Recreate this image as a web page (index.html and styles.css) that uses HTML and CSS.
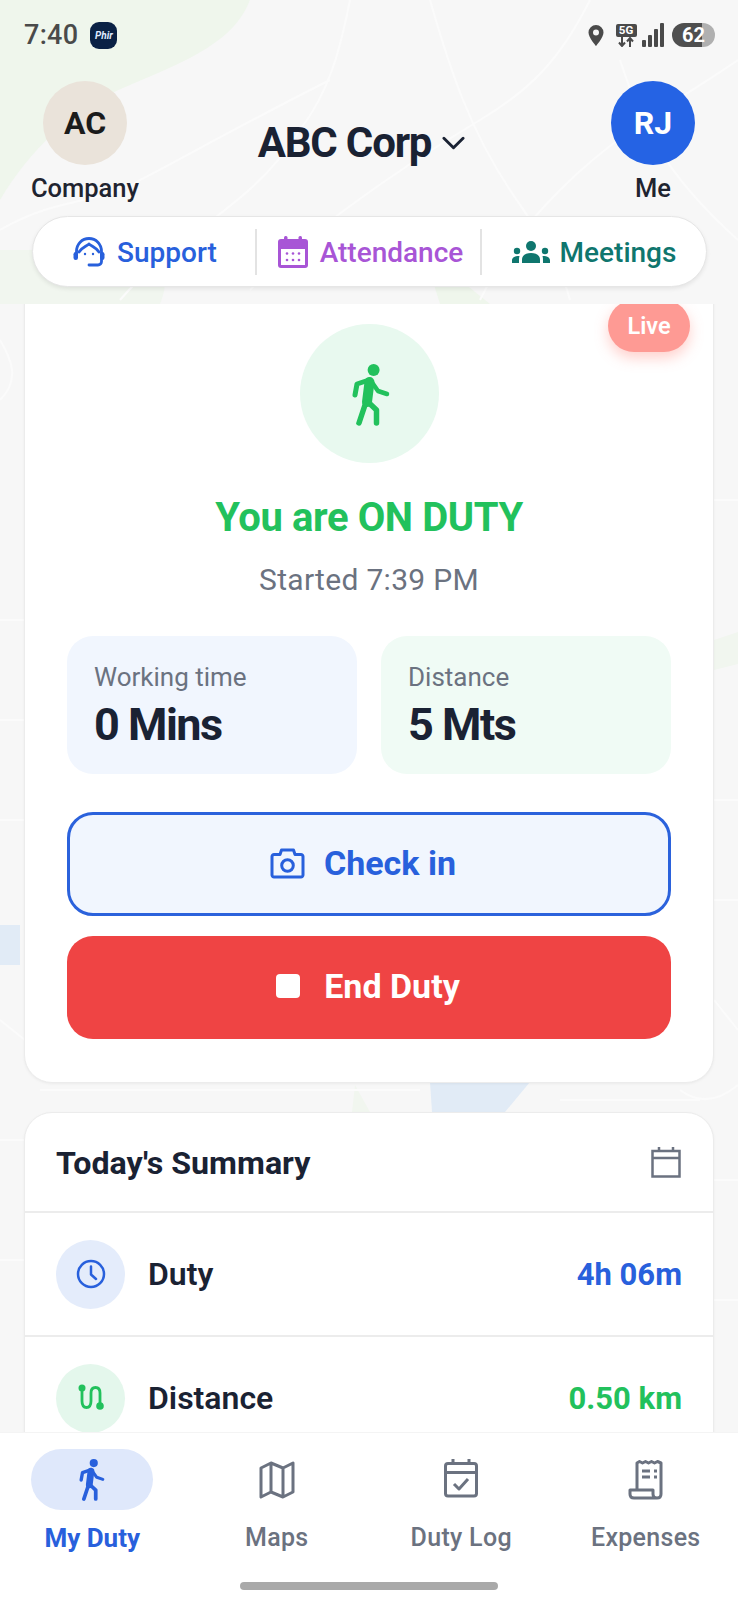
FILE: index.html
```html
<!DOCTYPE html>
<html lang="en">
<head>
<meta charset="utf-8">
<title>My Duty</title>
<link rel="stylesheet" href="styles.css">
</head>
<body>
<svg class="defs" width="0" height="0" aria-hidden="true">
  <symbol id="walker" viewBox="0 0 38 62">
    <circle cx="21.600" cy="6" r="6" fill="currentColor"/>
    <g fill="none" stroke="currentColor" stroke-linecap="round" stroke-linejoin="round">
      <path d="M17 16 L5 20 L3 31" stroke-width="5"/>
      <path d="M19 17 L26 27 L35 30" stroke-width="4.500"/>
      <path d="M17.500 18 L15 38" stroke-width="10"/>
      <path d="M14 38 L7 59" stroke-width="5.500"/>
      <path d="M16 38 L24.500 46 L24.500 59" stroke-width="5.500"/>
    </g>
  </symbol>
</svg>

<svg class="map" viewBox="0 0 738 1600" preserveAspectRatio="none" aria-hidden="true">
  <path class="park" d="M0 0H250C235 40 190 60 130 85C70 110 30 150 0 200Z"/>
  <path class="park-soft" d="M0 250H150C168 262 168 285 160 304H0Z"/>
  <path class="park" d="M430 272C445 265 460 280 490 304H440Z"/>
  <path class="park-soft" d="M714 640L738 632V664L714 670Z"/>
  <path class="water" d="M0 925H20V965H0Z"/>
  <path class="water" d="M430 1082H530L505 1112H432Z"/>
  <path class="park-soft" d="M355 1085L370 1112H352Z"/>
  <g class="roads">
    <path d="M120 300C180 230 250 210 300 130C330 90 340 50 350 0"/>
    <path d="M0 230C60 195 100 205 140 180C170 165 250 120 330 80"/>
    <path d="M250 290C300 240 380 180 480 120C530 90 560 60 590 0"/>
    <path d="M430 0C450 70 470 130 510 190C530 220 560 260 570 300"/>
    <path d="M738 60C680 100 620 130 560 190C520 230 500 260 480 300"/>
    <path d="M620 60C640 120 660 170 738 240"/>
    <path d="M0 340C12 360 20 380 0 400"/>
    <path d="M0 620H25M0 720H25M0 820H25M714 500H738M714 800H738M714 900H738"/>
    <path d="M0 1020L25 1040M714 1000L738 1030M0 1140H25M714 1180H738M0 1260H25M714 1300H738"/>
    <path d="M40 1090H420M560 1100H700"/>
    <path d="M680 1090C700 1105 720 1100 738 1085"/>
  </g>
</svg>

<div class="app">
  <header class="status">
    <div class="status-left">
      <span class="clock">7:40</span>
      <span class="app-badge">Phir</span>
    </div>
    <div class="status-right">
      <svg class="pin" viewBox="0 0 16 21"><path fill-rule="evenodd" d="M8 0a7.500 7.500 0 0 1 7.500 7.500C15.500 12.500 8 21 8 21S.5 12.500.5 7.500A7.500 7.500 0 0 1 8 0Zm0 4.500a3 3 0 1 0 0 6 3 3 0 0 0 0-6Z"/></svg>
      <span class="net">
        <span class="net-label">5G</span>
        <svg class="net-arrows" viewBox="0 0 20 10"><path d="M6 0V8M3 5.500L6 9L9 5.500M14 10V2M11 4.500L14 1L17 4.500"/></svg>
      </span>
      <svg class="signal" viewBox="0 0 22 24"><rect x="0" y="17" width="4" height="7" rx="1"/><rect x="6" y="12" width="4" height="12" rx="1"/><rect x="12" y="6" width="4" height="18" rx="1"/><rect x="18" y="0" width="4" height="24" rx="1"/></svg>
      <span class="battery"><span class="battery-text">62</span></span>
    </div>
  </header>

  <section class="top">
    <div class="person">
      <span class="avatar avatar-company">AC</span>
      <span class="person-label">Company</span>
    </div>
    <div class="company">
      <span class="company-name">ABC Corp</span>
      <svg class="chevron" viewBox="0 0 24 14"><path d="M2 2L12 12L22 2"/></svg>
    </div>
    <div class="person">
      <span class="avatar avatar-me">RJ</span>
      <span class="person-label">Me</span>
    </div>
  </section>

  <nav class="quick">
    <a class="quick-item quick-blue">
      <svg class="quick-icon icon-support" viewBox="0 0 32 30"><path class="line" d="M3.500 19V14.500C3.500 7 9 1.500 16 1.500S28.500 7 28.500 14.500V19"/><path class="line" d="M6 15C8 11 12 10 16 7C20 10 24 11 26 15"/><path class="line" d="M28.500 21V24.500C28.500 26.500 27 28 25 28H16"/><rect class="solid" x="0.500" y="15" width="4.500" height="8" rx="2.200"/><rect class="solid" x="27" y="15" width="4.500" height="8" rx="2.200"/><circle class="solid" cx="12" cy="17" r="1.200"/><circle class="solid" cx="20" cy="17" r="1.200"/></svg>
      <span>Support</span>
    </a>
    <a class="quick-item quick-purple">
      <svg class="quick-icon icon-attend" viewBox="0 0 30 32"><rect class="solid" x="6" y="0" width="3.500" height="7" rx="1.500"/><rect class="solid" x="20.500" y="0" width="3.500" height="7" rx="1.500"/><rect class="solid" x="0" y="3" width="30" height="29" rx="3"/><rect class="hole" x="3" y="13" width="24" height="16"/><g class="dots"><circle cx="9" cy="17.500" r="1.300"/><circle cx="15" cy="17.500" r="1.300"/><circle cx="21" cy="17.500" r="1.300"/><circle cx="9" cy="24" r="1.300"/><circle cx="15" cy="24" r="1.300"/><circle cx="21" cy="24" r="1.300"/></g></svg>
      <span>Attendance</span>
    </a>
    <a class="quick-item quick-teal">
      <svg class="quick-icon icon-meet" viewBox="0 0 38 22"><circle class="solid" cx="19" cy="5" r="5"/><circle class="solid" cx="5" cy="10" r="3.200"/><circle class="solid" cx="33" cy="10" r="3.200"/><path class="solid" d="M10 22V18.500C10 14.500 13.500 12 19 12S28 14.500 28 18.500V22Z"/><path class="solid" d="M0 22V19.500C0 17 2 15 7.500 15C7 16.500 7 18 7 22Z"/><path class="solid" d="M38 22V19.500C38 17 36 15 30.500 15C31 16.500 31 18 31 22Z"/></svg>
      <span>Meetings</span>
    </a>
  </nav>

  <main class="scroll">
    <section class="card duty">
      <span class="live">Live</span>
      <div class="hero-circle">
        <svg class="hero-walker"><use href="#walker"/></svg>
      </div>
      <h1 class="duty-title">You are ON DUTY</h1>
      <p class="duty-started">Started 7:39 PM</p>
      <div class="stats">
        <div class="stat stat-blue">
          <span class="stat-label">Working time</span>
          <span class="stat-value">0 Mins</span>
        </div>
        <div class="stat stat-green">
          <span class="stat-label">Distance</span>
          <span class="stat-value">5 Mts</span>
        </div>
      </div>
      <button class="btn btn-check">
        <svg class="camera" viewBox="0 0 35 31"><path d="M2 8.500C2 7.500 3 6.500 4 6.500H10L11.500 2H23.500L25 6.500H31C32 6.500 33 7.500 33 8.500V27C33 28 32 29 31 29H4C3 29 2 28 2 27Z"/><circle cx="17.500" cy="17.500" r="5.800"/></svg>
        <span>Check in</span>
      </button>
      <button class="btn btn-end">
        <span class="stop"></span>
        <span>End Duty</span>
      </button>
    </section>

    <section class="card summary">
      <div class="summary-head">
        <h2 class="summary-title">Today's Summary</h2>
        <svg class="summary-cal" viewBox="0 0 30 32"><path d="M1.500 5H28.500V30.500H1.500ZM1.500 12H28.500M8 1V5M22 1V5"/></svg>
      </div>
      <div class="row">
        <span class="row-icon row-icon-blue">
          <svg class="clock-icon" viewBox="0 0 30 30"><circle cx="15" cy="15" r="13"/><path d="M15 7.500V15.500L20 20"/></svg>
        </span>
        <span class="row-label">Duty</span>
        <span class="row-value value-blue">4h 06m</span>
      </div>
      <div class="row">
        <span class="row-icon row-icon-green">
          <svg class="route-icon" viewBox="0 0 26 28"><path d="M4 4V17C4 21 5.500 23.500 8.500 23.500S13 21 13 17V9C13 5.500 14.500 3.500 17.500 3.500S22 5.500 22 9V21"/><circle cx="4" cy="4" r="3.500"/><circle cx="22" cy="22" r="3.800"/></svg>
        </span>
        <span class="row-label">Distance</span>
        <span class="row-value value-green">0.50 km</span>
      </div>
    </section>
  </main>

  <footer class="tabs">
    <a class="tab tab-active">
      <span class="tab-icon"><svg class="tab-walker"><use href="#walker"/></svg></span>
      <span class="tab-label">My Duty</span>
    </a>
    <a class="tab">
      <span class="tab-icon"><svg class="tab-svg" viewBox="0 0 36 38"><path d="M2 7L12 2L24 7L34 2V31L24 36L12 31L2 36ZM12 2V31M24 7V36"/></svg></span>
      <span class="tab-label">Maps</span>
    </a>
    <a class="tab">
      <span class="tab-icon"><svg class="tab-svg tab-svg-up" viewBox="0 0 36 40"><path d="M2.500 8C2.500 6.500 3.500 5.500 5 5.500H31C32.500 5.500 33.500 6.500 33.500 8V35.500C33.500 37 32.500 38 31 38H5C3.500 38 2.500 37 2.500 35.500ZM2.500 14.500H33.500M10 1V5.500M26 1V5.500M11 26L16 31L25 21"/></svg></span>
      <span class="tab-label">Duty Log</span>
    </a>
    <a class="tab">
      <span class="tab-icon"><svg class="tab-svg" viewBox="0 0 36 40"><path d="M9 30V3L11.500 1.500L14.500 3L17.500 1.500L20.500 3L23.500 1.500L26.500 3L29.500 1.500L33 3V34C33 36.500 31.500 38 29 38H6C3.500 38 2 36.500 2 34V30H25V34C25 36.500 26.500 38 29 38M14 11H22M14 17H22M26 11H29M26 17H29"/></svg></span>
      <span class="tab-label">Expenses</span>
    </a>
  </footer>
  <div class="home-bar"><span class="home-pill"></span></div>
</div>
</body>
</html>
```

FILE: styles.css
```css
* { box-sizing: border-box; }
html, body { margin: 0; padding: 0; }
body {
  position: relative;
  width: 738px;
  height: 1600px;
  overflow: hidden;
  background: #f7f7f7;
  font-family: Roboto, "Liberation Sans", sans-serif;
  color: #1a2233;
}
.defs { position: absolute; }
.map { position: absolute; inset: 0; width: 738px; height: 1600px; }
.park { fill: #eff6ec; }
.park-soft { fill: #f1f6ef; }
.water { fill: #e1ebf6; }
.roads { fill: none; stroke: #fbfbfb; stroke-width: 2; }
.app {
  position: relative;
  display: flex;
  flex-direction: column;
  height: 1600px;
}

/* status bar */
.status {
  display: flex;
  justify-content: space-between;
  align-items: center;
  height: 70px;
  padding: 0 23px 0 24px;
  color: #4a4a4a;
}
.status-left { display: flex; align-items: center; gap: 12px; }
.clock { font-size: 27px; font-weight: 500; letter-spacing: .3px; }
.app-badge {
  display: flex;
  align-items: center;
  justify-content: center;
  width: 27px;
  height: 27px;
  border-radius: 9px;
  background: #0a2145;
  color: #dfe9ff;
  font-size: 10px;
  font-style: italic;
  font-weight: 700;
}
.status-right { display: flex; align-items: center; }
.pin { width: 16px; height: 21px; fill: #4a4a4a; margin-right: 11px; }
.net { display: flex; flex-direction: column; align-items: center; width: 22px; margin-right: 5px; }
.net-label {
  display: block;
  width: 21px;
  height: 13px;
  border-radius: 2px;
  background: #4a4a4a;
  color: #fff;
  font-size: 11.500px;
  font-weight: 700;
  line-height: 13px;
  text-align: center;
}
.net-arrows { width: 20px; height: 10px; fill: none; stroke: #4a4a4a; stroke-width: 2; }
.signal { width: 22px; height: 24px; fill: #4a4a4a; margin-right: 8px; }
.battery {
  display: flex;
  align-items: center;
  justify-content: center;
  width: 43px;
  height: 24px;
  border-radius: 12px;
  background: linear-gradient(90deg, #4f4f4f 70%, #b0b0b0 70%);
}
.battery-text { color: #fff; font-size: 20px; font-weight: 700; }

/* header */
.top {
  display: grid;
  grid-template-columns: 110px 1fr 110px;
  align-items: start;
  height: 130px;
  padding: 11px 30px 0 30px;
}
.person { display: flex; flex-direction: column; align-items: center; }
.avatar {
  display: flex;
  align-items: center;
  justify-content: center;
  width: 84px;
  height: 84px;
  border-radius: 50%;
  font-size: 32px;
  font-weight: 700;
}
.avatar-company { background: #eae3da; color: #1b1b1b; }
.avatar-me { background: #2563e4; color: #fff; }
.person-label { margin-top: 8px; font-size: 25.500px; font-weight: 500; line-height: 30px; color: #1f2430; }
.company {
  display: flex;
  align-items: center;
  justify-content: center;
  gap: 11px;
  padding: 35px 15px 0 0;
}
.company-name { font-size: 42px; font-weight: 700; line-height: 54px; letter-spacing: -1.200px; }
.chevron { width: 23px; height: 14px; fill: none; stroke: #1a2233; stroke-width: 3; stroke-linecap: round; stroke-linejoin: round; }

/* quick links */
.quick {
  display: grid;
  grid-template-columns: 222px 225px 1fr;
  align-items: center;
  height: 71px;
  margin: 16px 31px 17px 32px;
  border: 1px solid #e6e6e6;
  border-radius: 36px;
  background: #fff;
  box-shadow: 0 2px 4px rgba(0,0,0,.08);
}
.quick-item {
  display: flex;
  align-items: center;
  justify-content: center;
  gap: 12px;
  height: 46px;
  padding-top: 1px;
  font-size: 28px;
  font-weight: 500;
}
.quick-item + .quick-item { border-left: 2px solid #e3e3e3; }
.quick-blue { padding-left: 2px; color: #2860dc; }
.quick-purple { padding-left: 4px; color: #a855d6; }
.quick-teal { gap: 10px; color: #0f766e; }
.quick-icon .solid { fill: currentColor; }
.quick-icon .line { fill: none; stroke: currentColor; stroke-width: 2.800; stroke-linecap: round; }
.quick-icon .hole { fill: #fff; }
.quick-icon .dots { fill: #a855d6; }
.icon-support { width: 32px; height: 30px; }
.icon-attend { width: 30px; height: 32px; }
.icon-meet { width: 38px; height: 22px; }

/* scrolling content */
.scroll {
  flex: 1;
  min-height: 0;
  overflow: hidden;
  padding: 0 24px;
}
.card {
  border: 1px solid #ececec;
  border-radius: 28px;
  background: #fff;
  box-shadow: 0 1px 3px rgba(0,0,0,.05);
}
.duty {
  position: relative;
  display: flex;
  flex-direction: column;
  align-items: center;
  margin-top: -30px;
  padding: 49px 42px 42px;
  height: 809px;
}
.live {
  position: absolute;
  top: 25px;
  right: 23px;
  width: 82px;
  height: 52px;
  border-radius: 26px;
  background: #fe9a94;
  box-shadow: 0 6px 14px rgba(254,120,110,.35);
  color: #fff;
  font-size: 23.500px;
  font-weight: 600;
  line-height: 52px;
  text-align: center;
}
.hero-circle {
  display: flex;
  align-items: center;
  justify-content: center;
  width: 139px;
  height: 139px;
  border-radius: 50%;
  background: #e8f9ef;
}
.hero-walker { width: 38px; height: 62px; margin: 3px 0 0 3px; color: #22c15c; }
.duty-title {
  margin: 31px 0 0;
  font-size: 40px;
  font-weight: 700;
  line-height: 48px;
  color: #22c15c;
  letter-spacing: -.4px;
}
.duty-started {
  margin: 20px 0 0;
  font-size: 30px;
  line-height: 36px;
  color: #6b7280;
  letter-spacing: .3px;
}
.stats {
  display: grid;
  grid-template-columns: 1fr 1fr;
  gap: 24px;
  width: 100%;
  margin-top: 38px;
}
.stat {
  display: flex;
  flex-direction: column;
  height: 138px;
  padding: 26px 27px;
  border-radius: 26px;
}
.stat-blue { background: #f1f6fe; }
.stat-green { background: #f0fbf5; }
.stat-label { font-size: 26px; line-height: 30px; color: #6b7280; }
.stat-value { margin-top: 7px; font-size: 45px; font-weight: 700; line-height: 52px; letter-spacing: -1.500px; color: #1a2233; }
.btn {
  display: flex;
  align-items: center;
  justify-content: center;
  width: 100%;
  border-radius: 26px;
  font-family: inherit;
  font-size: 34px;
  font-weight: 700;
}
.btn-check {
  gap: 19px;
  height: 104px;
  margin-top: 38px;
  padding: 0 12px 2px 0;
  border: 3px solid #2b62dc;
  background: #f1f6fe;
  color: #2860dc;
}
.btn-end {
  gap: 24px;
  height: 103px;
  margin-top: 20px;
  padding: 0 2px 3px 0;
  border: 0;
  background: #ef4444;
  color: #fff;
}
.camera { width: 35px; height: 31px; fill: none; stroke: #2860dc; stroke-width: 3; stroke-linejoin: round; }
.stop { width: 24px; height: 24px; border-radius: 4px; background: #fff; }

/* summary */
.summary { margin-top: 29px; height: 460px; }
.summary-head {
  display: flex;
  align-items: center;
  justify-content: space-between;
  height: 100px;
  padding: 0 32px 0 31px;
  border-bottom: 2px solid #ececec;
}
.summary-title { margin: 2px 0 0; font-size: 32.200px; font-weight: 700; line-height: 40px; color: #1a2233; }
.summary-cal { width: 30px; height: 32px; fill: none; stroke: #6b7280; stroke-width: 2.500; }
.row {
  display: flex;
  align-items: center;
  height: 124px;
  padding: 0 31px;
  border-bottom: 2px solid #ececec;
}
.row-icon {
  display: flex;
  align-items: center;
  justify-content: center;
  width: 69px;
  height: 69px;
  border-radius: 50%;
}
.row-icon-blue { background: #e4ecfb; }
.row-icon-green { background: #e4f7ec; }
.clock-icon { width: 30px; height: 30px; fill: none; stroke: #2860dc; stroke-width: 2.500; stroke-linecap: round; stroke-linejoin: round; }
.route-icon { width: 26px; height: 28px; fill: none; stroke: #22c15c; stroke-width: 2.800; }
.route-icon circle { fill: #22c15c; stroke: none; }
.row-label { margin-left: 23px; font-size: 32px; font-weight: 600; color: #1a2233; }
.row-value { margin-left: auto; font-size: 31px; font-weight: 700; }
.value-blue { color: #2860dc; }
.value-green { color: #22c15c; }

/* bottom nav */
.tabs {
  display: grid;
  grid-template-columns: repeat(4, 1fr);
  height: 133px;
  padding-top: 16px;
  background: #fff;
  border-top: 1px solid #f4f4f4;
}
.tab { display: flex; flex-direction: column; align-items: center; color: #6b7280; }
.tab-icon {
  display: flex;
  align-items: center;
  justify-content: center;
  width: 122px;
  height: 61px;
  border-radius: 31px;
}
.tab-active { color: #2860dc; }
.tab-active .tab-icon { background: #dfe8fb; }
.tab-walker { width: 26px; height: 42px; color: #2860dc; }
.tab-svg { width: 36px; height: 40px; fill: none; stroke: #6b7280; stroke-width: 3; stroke-linejoin: round; }
.tab-svg-up { margin-bottom: 4px; }
.tab-label { margin-top: 13px; font-size: 25px; font-weight: 500; line-height: 30px; letter-spacing: .3px; }
.tab-active .tab-label { font-size: 26px; font-weight: 700; letter-spacing: 0; }
.home-bar {
  display: flex;
  justify-content: center;
  align-items: flex-start;
  height: 35px;
  padding-top: 17px;
  background: #fff;
}
.home-pill { width: 258px; height: 8px; border-radius: 4px; background: #a9a9a9; }
```
